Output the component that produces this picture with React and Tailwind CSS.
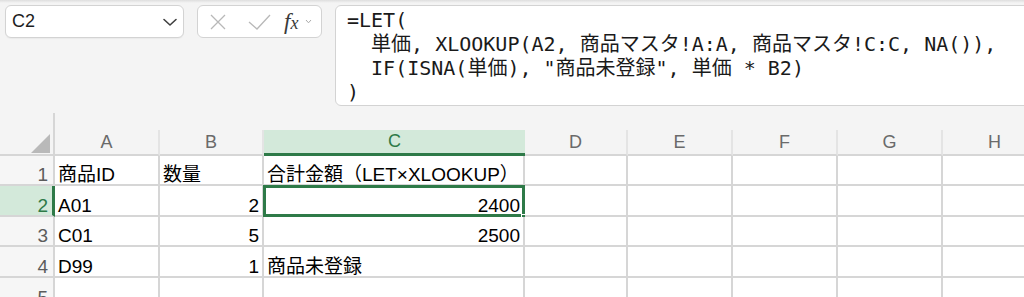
import React from 'react';

const cols = [
  { key: 'A', w: 'w-[105px]' },
  { key: 'B', w: 'w-[104px]' },
  { key: 'C', w: 'w-[261px]' },
  { key: 'D', w: 'w-[103px]' },
  { key: 'E', w: 'w-[105px]' },
  { key: 'F', w: 'w-[105px]' },
  { key: 'G', w: 'w-[105px]' },
  { key: 'H', w: 'w-[105px]' },
];

const rows = [
  { n: 1, h: 'h-[30px]', cells: { A: ['商品ID'], B: ['数量'], C: ['合計金額（LET×XLOOKUP）'] } },
  { n: 2, h: 'h-[31px]', cells: { A: ['A01'], B: ['2', 'r'], C: ['2400', 'r'] } },
  { n: 3, h: 'h-[30px]', cells: { A: ['C01'], B: ['5', 'r'], C: ['2500', 'r'] } },
  { n: 4, h: 'h-[31px]', cells: { A: ['D99'], B: ['1', 'r'], C: ['商品未登録'] } },
  { n: 5, h: 'h-[31px]', cells: {} },
];

const formula = [
  '=LET(',
  '  単価, XLOOKUP(A2, 商品マスタ!A:A, 商品マスタ!C:C, NA()),',
  '  IF(ISNA(単価), "商品未登録", 単価 * B2)',
  ')',
];

const sans = 'font-["Liberation_Sans","Noto_Sans_CJK_JP",sans-serif]';

const TopBar = () => (
  <div className="h-[113px] shrink-0">
    <div className="h-[3px] bg-gradient-to-b from-[#dedede] to-[#f4f4f4]" />
    <div className="flex items-start pt-[2px] pl-[5px]">
      <div className="flex h-[33px] w-[179px] shrink-0 items-center justify-between rounded-[6px] border border-[#d3d3d3] bg-white pl-[6px] pr-[5px] shadow-[0_1px_1px_rgba(0,0,0,0.04)]">
        <span className="text-[18px] text-[#1d1d1d]">C2</span>
        <svg width="16" height="10" viewBox="0 0 16 10" fill="none">
          <path d="M2 2.5 L8 8 L14 2.5" stroke="#3f3f3f" strokeWidth="1.6" strokeLinecap="round" strokeLinejoin="round" />
        </svg>
      </div>

      <div className="ml-[13px] flex h-[33px] w-[125px] shrink-0 items-center rounded-[6px] border border-[#d3d3d3] bg-white pl-[12px]">
        <svg width="16" height="16" viewBox="0 0 16 16" fill="none">
          <path d="M1 1 L15 15 M15 1 L1 15" stroke="#b8b8b8" strokeWidth="1.3" />
        </svg>
        <svg className="ml-[22px]" width="23" height="16" viewBox="0 0 23 16" fill="none">
          <path d="M1 8 L9 15 L22 1" stroke="#b8b8b8" strokeWidth="1.3" />
        </svg>
        <span className='ml-[13px] font-["Liberation_Serif",serif] text-[23px] italic leading-none text-[#3a3a3a]'>
          f<span className="text-[18px]">x</span>
        </span>
        <svg className="ml-[7px]" width="7" height="5" viewBox="0 0 7 5" fill="none">
          <path d="M1 1 L3.5 3.8 L6 1" stroke="#aaaaaa" strokeWidth="1" />
        </svg>
      </div>

      <div className="ml-[13px] h-[101px] w-[720px] shrink-0 rounded-[6px] border border-[#d3d3d3] bg-white pl-[11px] pt-[2px]">
        {formula.map((line, i) => (
          <div
            key={i}
            className='whitespace-pre font-["DejaVu_Sans_Mono","Noto_Sans_CJK_JP",monospace] text-[20px] leading-[24px] text-[#1a1a1a]'
          >
            {line}
          </div>
        ))}
      </div>
    </div>
  </div>
);

const HeaderRow = () => (
  <div className="flex h-[43px]">
    <div className="relative w-[55px] shrink-0 border-r-2 border-b-2 border-[#d6d6d6]">
      <svg className="absolute left-[31px] top-[21px]" width="19" height="19" viewBox="0 0 19 19">
        <polygon points="0,19 19,19 19,0" fill="#b9b9b9" />
      </svg>
    </div>
    {cols.map((c) => (
      <div key={c.key} className={`${c.w} shrink-0 flex flex-col`}>
        <div className="h-[17px]" />
        {c.key === 'C' ? (
          <div className="flex h-[26px] items-center justify-center border-b-[3px] border-[#2e7a48] bg-[#d3e9da] text-[18px] text-[#2e7a48]">
            C
          </div>
        ) : (
          <div className="flex h-[26px] items-center justify-center border-r-2 border-b-2 border-r-[#e4e4e4] border-b-[#d6d6d6] text-[18px] text-[#6a6a6a]">
            {c.key}
          </div>
        )}
      </div>
    ))}
  </div>
);

const Row = ({ row }) => {
  const active = row.n === 2;
  return (
    <div className={`flex ${row.h}`}>
      <div
        className={
          active
            ? 'flex w-[55px] shrink-0 items-end justify-end border-r-[3px] border-b-2 border-r-[#2e7a48] border-b-[#d6d6d6] bg-[#d3e9da] pr-[4px] text-[19px] leading-[19px] text-[#2e7a48]'
            : 'flex w-[55px] shrink-0 items-end justify-end border-r-2 border-b-2 border-[#d6d6d6] bg-[#f6f6f6] pr-[5px] text-[19px] leading-[19px] text-[#5c5c5c]'
        }
      >
        {row.n}
      </div>
      {cols.map((c) => {
        const cell = row.cells[c.key];
        const right = cell && cell[1] === 'r';
        const selected = active && c.key === 'C';
        return (
          <div
            key={c.key}
            className={`relative ${c.w} shrink-0 flex items-end border-r-2 border-b-2 border-[#d6d6d6] bg-white text-[19px] leading-[19px] text-black ${
              right ? 'justify-end pr-[3px]' : 'pl-[3px]'
            }`}
          >
            {cell ? <span className="whitespace-nowrap">{cell[0]}</span> : null}
            {selected ? (
              <>
                <div className="pointer-events-none absolute -left-[1px] -top-[1px] right-[-2px] bottom-[-2px] border-[3px] border-[#2e7a48]" />
                <div className="absolute right-[-6px] bottom-[-7px] h-[8px] w-[8px] border border-white bg-[#2e7a48]" />
              </>
            ) : null}
          </div>
        );
      })}
    </div>
  );
};

const App = () => (
  <div className={`flex h-[297px] w-[1024px] flex-col overflow-hidden bg-[#f4f4f4] ${sans}`}>
    <TopBar />
    <div className="flex flex-col">
      <HeaderRow />
      {rows.map((r) => (
        <Row key={r.n} row={r} />
      ))}
    </div>
  </div>
);

export default App;
